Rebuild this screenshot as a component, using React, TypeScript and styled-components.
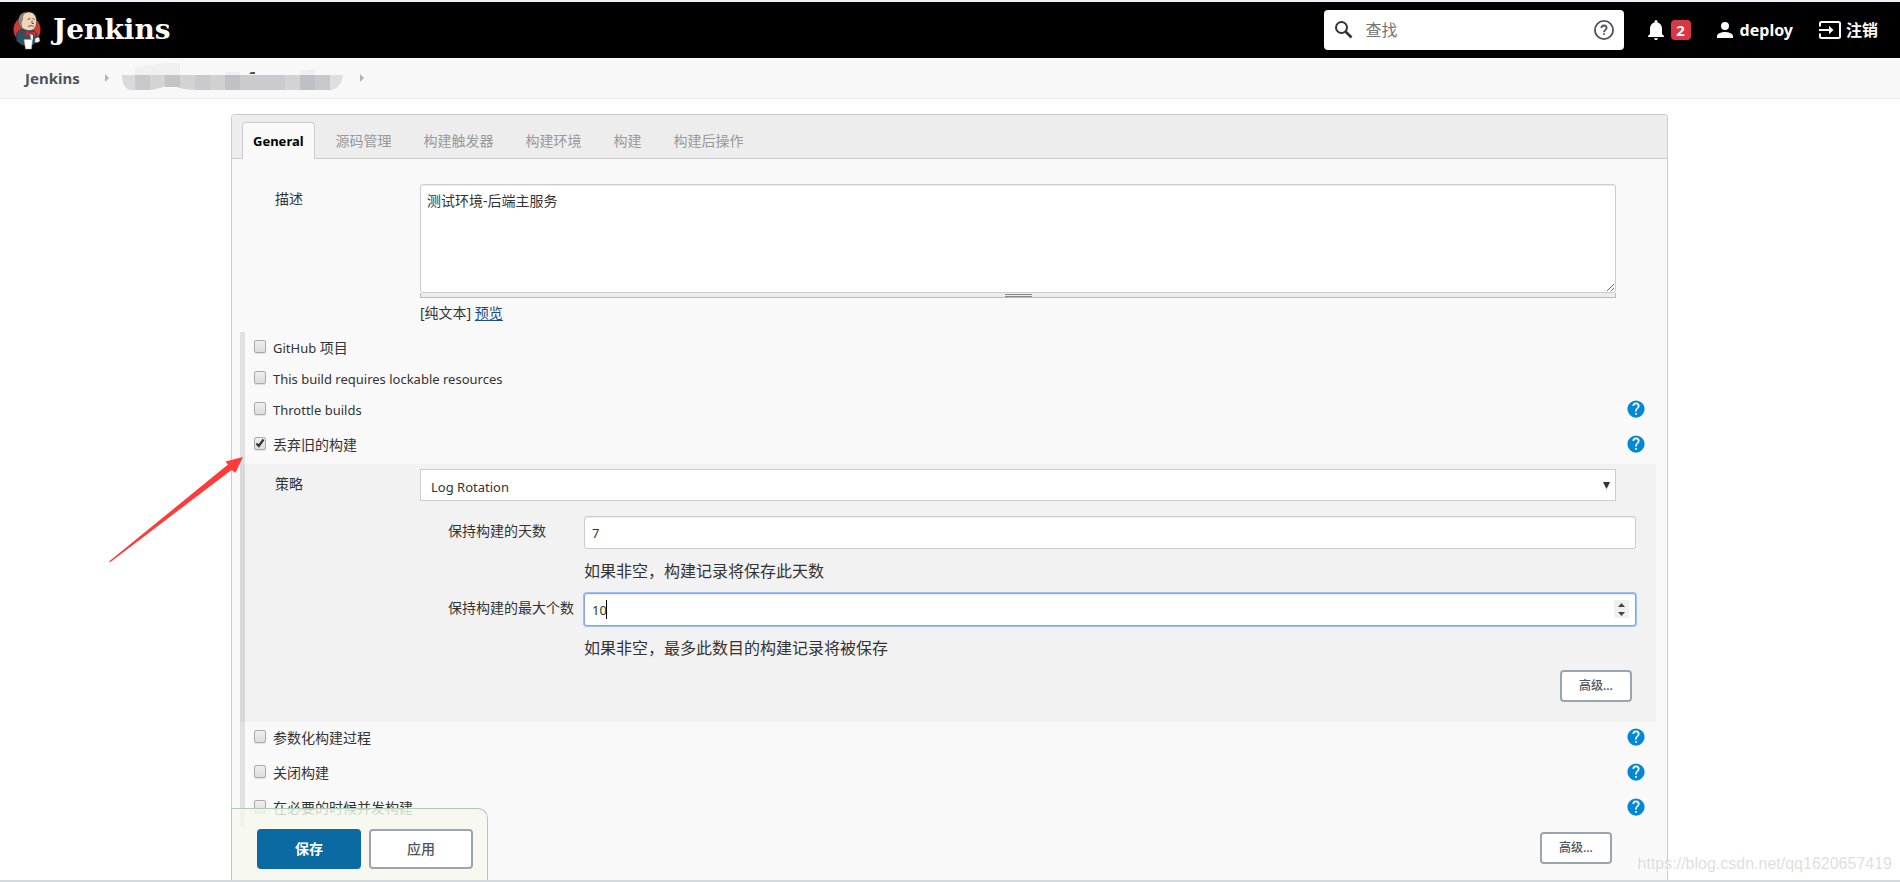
import React, { useState } from "react";
import styled, { createGlobalStyle, css } from "styled-components";

const GlobalStyle = createGlobalStyle`
  *, *::before, *::after { box-sizing: border-box; }
  body {
    margin: 0;
    background: #fff;
    color: #333;
    font: 14px/21px "Noto Sans", "Noto Sans CJK SC", sans-serif;
  }
  button, input, textarea, select { font: inherit; color: inherit; }
`;

const Page = styled.div`
  min-height: 100vh;
  display: flex;
  flex-direction: column;
  border-top: 2px solid #e9f2f8;
  border-bottom: 2px solid #d3dade;
`;

const Header = styled.header`
  display: flex;
  align-items: center;
  height: 56px;
  padding: 0 22px 0 12px;
  background: #000;
  color: #fff;
`;

const Brand = styled.a`
  display: flex;
  align-items: center;
  gap: 11px;
  margin-right: auto;
  color: #fff;
  text-decoration: none;
  font: bold 28px/40px "DejaVu Serif", serif;
`;

const SearchBox = styled.label`
  display: flex;
  align-items: center;
  width: 300px;
  height: 40px;
  margin-right: 24px;
  padding: 0 10px;
  border-radius: 4px;
  background: #fff;
  color: #333;
`;

const SearchInput = styled.input`
  flex: 1;
  min-width: 0;
  margin: 0 12px;
  padding: 0;
  border: 0;
  outline: 0;
  background: none;
  font-size: 16px;
  line-height: 24px;
  &::placeholder { color: #757575; opacity: 1; }
`;

const HeaderLinks = styled.nav`
  display: flex;
  align-items: center;
  gap: 26px;
`;

const HeaderLink = styled.a<{ $gap: number }>`
  display: flex;
  align-items: center;
  gap: ${(p) => p.$gap}px;
  color: #fff;
  font-size: 16px;
  line-height: 24px;
  font-weight: 700;
  text-decoration: none;
  svg { display: block; }
`;

const Badge = styled.span`
  width: 20px;
  border-radius: 4px;
  background: #dc3545;
  font-size: 15px;
  line-height: 20px;
  text-align: center;
`;

const Breadcrumbs = styled.nav`
  display: flex;
  align-items: center;
  height: 41px;
  padding: 0 25px;
  border-bottom: 1px solid #e6efed;
  background: #f8f8f8;
`;

const Crumb = styled.a`
  color: #4d545d;
  font-size: 15px;
  line-height: 24px;
  font-weight: 700;
  text-decoration: none;
`;

const CrumbArrow = styled.span<{ $before: number }>`
  margin: 0 13px 0 ${(p) => p.$before}px;
  border: 4px solid transparent;
  border-left-color: #b4b4b4;
  border-right-width: 0;
`;

const Main = styled.main`
  position: relative;
  flex: 1;
  display: flex;
  padding: 15px 232px 0 231px;
`;

const Panel = styled.form`
  flex: 1;
  min-width: 0;
  border: 1px solid #ccc;
  border-bottom: 0;
  border-radius: 4px 4px 0 0;
  background: #f9f9f9;
`;

const TabBar = styled.div`
  display: flex;
  align-items: flex-end;
  gap: 10px;
  height: 44px;
  padding-left: 10px;
  border-bottom: 1px solid #ccc;
  border-radius: 3px 3px 0 0;
  background: #ededed;
`;

const Tab = styled.button<{ $active?: boolean }>`
  height: 37px;
  margin-bottom: -1px;
  padding: 0 10px 2px;
  border: 1px solid transparent;
  border-bottom: 0;
  border-radius: 4px 4px 0 0;
  background: none;
  color: #999;
  ${(p) =>
    p.$active &&
    css`
      padding-bottom: 0;
      border-color: #ccc;
      background: #f9f9f9;
      color: #000;
      font-size: 13px;
      font-weight: 700;
    `}
`;

const PanelBody = styled.div`
  padding: 25px 11px 0 8px;
`;

const FieldRow = styled.div`
  display: grid;
  grid-template-columns: 145px 1fr;
  padding: 0 40px 0 35px;
`;

const NestedRow = styled(FieldRow)`
  padding-left: 30px;
`;

const FieldLabel = styled.label`
  padding-top: 4px;
`;

const Description = styled.textarea`
  display: block;
  width: 100%;
  height: 109px;
  padding: 5px 6px;
  border: 1px solid #ccc;
  border-radius: 3px;
  background: #fff;
  box-shadow: inset 0 1px 1px rgba(0, 0, 0, 0.08);
  outline: 0;
  resize: vertical;
`;

const ResizeBar = styled.div`
  display: flex;
  justify-content: center;
  align-items: center;
  height: 5px;
  border: 1px solid #bbb;
  border-top: 0;
  background: #ececec;
`;

const Grip = styled.span`
  width: 27px;
  height: 3px;
  border: solid #888;
  border-width: 1px 0;
`;

const PreviewLine = styled.div`
  height: 34px;
  line-height: 29px;
`;

const PreviewLink = styled.a`
  color: #204a87;
  text-underline-offset: 2px;
`;

const OptionGroup = styled.div`
  border-left: 5px solid #e0e0e0;
`;

const OptionRow = styled.div<{ $help?: boolean }>`
  display: flex;
  align-items: flex-start;
  height: ${(p) => (p.$help ? 35 : 31)}px;
  padding: 5px 11px 0 9px;
`;

const OptionLabel = styled.label`
  display: flex;
  gap: 7px;
  margin-right: auto;
`;

const Latin = styled.span`
  font-size: 13px;
  line-height: 23px;
`;

const CheckInput = styled.input`
  appearance: none;
  width: 12px;
  height: 13px;
  margin: 3px 0 0;
  border: 1px solid #aaa;
  border-radius: 2px;
  background: linear-gradient(#efefef, #dcdcdc);
  box-shadow: 0 1px 1px rgba(0, 0, 0, 0.1);
`;

const CheckWrap = styled.span`
  position: relative;
  display: flex;
  align-items: flex-start;
  svg {
    position: absolute;
    left: 1px;
    top: 4px;
    pointer-events: none;
  }
`;

const HelpButton = styled.button`
  display: flex;
  width: 18px;
  height: 18px;
  margin-top: 1px;
  padding: 0;
  border: 0;
  background: none;
`;

const Nested = styled.div`
  margin-left: -5px;
  padding: 5px 0 20px;
  border-left: 5px solid #d9d9d9;
  background: #f2f2f2;
`;

const SelectWrap = styled.div`
  position: relative;
  display: flex;
  svg {
    position: absolute;
    right: 6px;
    top: 13px;
    pointer-events: none;
  }
`;

const Select = styled.select`
  appearance: none;
  flex: 1;
  height: 32px;
  padding: 4px 10px 0;
  border: 1px solid #ccc;
  border-radius: 0;
  background: #fff;
  font-size: 13px;
`;

const NestedFields = styled.div`
  display: grid;
  grid-template-columns: 136px 1fr;
  padding: 15px 20px 0 203px;
`;

const NumberWrap = styled.div`
  position: relative;
  display: flex;
`;

const NumberInput = styled.input<{ $focused?: boolean }>`
  appearance: textfield;
  flex: 1;
  min-width: 0;
  height: 33px;
  padding: 1px 7px 0;
  border: 1px solid #ccc;
  border-radius: 3px;
  background: #fff;
  box-shadow: inset 0 1px 1px rgba(0, 0, 0, 0.08);
  font-size: 13px;
  outline: 0;
  &::-webkit-inner-spin-button { appearance: none; margin: 0; }
  ${(p) =>
    p.$focused &&
    css`
      border-color: #86a9e4;
      box-shadow: 0 0 0 1px #9cbdf8, inset 0 1px 1px rgba(0, 0, 0, 0.08);
      caret-color: transparent;
    `}
`;

const Caret = styled.span`
  position: absolute;
  left: 22px;
  top: 7px;
  width: 1px;
  height: 19px;
  background: #000;
`;

const Spinner = styled.span`
  position: absolute;
  right: 7px;
  top: 7px;
  display: flex;
  flex-direction: column;
  width: 15px;
  height: 18px;
  background: #f0f0f0;
`;

const SpinButton = styled.button`
  display: flex;
  align-items: center;
  justify-content: center;
  height: 9px;
  padding: 0;
  border: 0;
  background: none;
`;

const Hint = styled.p`
  grid-column: 2;
  margin: 0;
  font-size: 16px;
  line-height: 44px;
`;

const ButtonLine = styled.div<{ $right: number; $top?: number }>`
  display: flex;
  justify-content: flex-end;
  padding: ${(p) => p.$top || 0}px ${(p) => p.$right}px 0 0;
`;

const Button = styled.button<{ $primary?: boolean; $large?: boolean }>`
  width: ${(p) => (p.$large ? 104 : 72)}px;
  height: ${(p) => (p.$large ? 40 : 32)}px;
  padding: 0;
  border: 2px solid ${(p) => (p.$primary ? "#0b6aa2" : "#9aa5af")};
  border-radius: 4px;
  background: ${(p) => (p.$primary ? "#0b6aa2" : "#fff")};
  color: ${(p) => (p.$primary ? "#fff" : "#4d545d")};
  font-size: ${(p) => (p.$large ? 14 : 12)}px;
  line-height: 20px;
  font-weight: ${(p) => (p.$primary ? 700 : 500)};
`;

const SaveBar = styled.div`
  position: absolute;
  left: 231px;
  bottom: 0;
  display: flex;
  gap: 8px;
  padding: 20px 14px 11px 25px;
  border: 1px solid #a9cdb8;
  border-bottom: 0;
  border-radius: 0 10px 0 0;
  background: rgba(246, 249, 239, 0.8);
`;

const Pointer = styled.svg`
  position: absolute;
  left: 109px;
  top: 357px;
  pointer-events: none;
`;

const Watermark = styled.span`
  position: absolute;
  right: 8px;
  bottom: 4px;
  color: rgba(200, 200, 200, 0.6);
  font: 16px/24px "Liberation Sans", sans-serif;
  text-shadow: 1px 1px 0 #fff;
`;

function ButlerLogo() {
  return (
    <svg width="30" height="40" viewBox="0 0 30 40" aria-hidden="true">
      <ellipse cx="15" cy="19.500" rx="13.500" ry="13.500" fill="#d33833" />
      <path d="M4.500 24c1-3 4-5 7-5l9 1c3 1 5 4 5 8l-3 6-4 2-9-1-5-4z" fill="#335061" stroke="#1c2b35" strokeWidth=".6" />
      <path d="M7.500 12c0-6 4-10 9-10 5.500 0 8 4 8 9.500 0 6-3 9-6.500 9-5 0-10.500-2-10.500-8.500z" fill="#f0d6b7" stroke="#333" strokeWidth=".5" />
      <path d="M7 14C5 7 9.500 1.500 15 2c-3 1-5 3.500-4.500 7.500L9 13l1 5c-2-1-3-2.500-3-4z" fill="#8e8a87" stroke="#333" strokeWidth=".4" />
      <path d="M15.500 9.500l3-1M20.500 8.500l2 1M20 10.500v3h2M16 16.500c2-1 4-1 6 0" fill="none" stroke="#5a463a" strokeWidth=".9" />
      <path d="M18 24l3 1v5h-2z" fill="#e9eef2" />
      <path d="M14 21l5 2 5-2-.500 5-4.500-2-5 2z" fill="#dd2228" />
      <path d="M12 29.500h8.500l-1 9.500h-6z" fill="#fff" stroke="#999" strokeWidth=".5" />
      <path d="M23 28.500l4-1.500 1 4-2.500 1.500H23z" fill="#f4f4f4" stroke="#777" strokeWidth=".5" />
    </svg>
  );
}

function HelpIcon() {
  return (
    <svg width="18" height="18" viewBox="0 0 24 24" aria-hidden="true">
      <path
        fill="#0288d8"
        d="M12 .5a11.5 11.5 0 1 0 0 23 11.5 11.5 0 0 0 0-23zm1.2 19.2h-2.4v-2.4h2.4v2.4zm2.4-9l-1.1 1.1c-.9.9-1.3 1.6-1.3 3.4h-2.4v-.6c0-1.3.5-2.5 1.4-3.4l1.5-1.5c.4-.4.7-1 .7-1.6a2.4 2.4 0 0 0-4.8 0H7.2a4.8 4.8 0 0 1 9.6 0c0 1-.5 2-1.2 2.6z"
      />
    </svg>
  );
}

const mosaicBlocks: [number, string][] = [
  [13, "#d9dadc"], [15, "#c7c9cc"], [15, "#d3d4d6"], [15, "#c2c4c7"], [15, "#d2d3d5"],
  [15, "#c8cacd"], [15, "#d0d1d3"], [15, "#bfc1c5"], [45, "#c9cbce"], [15, "#d2d3d5"],
  [15, "#bdc1c5"], [15, "#c7c8cc"], [13, "#dddee0"],
];

function HiddenCrumb() {
  let x = 0;
  return (
    <svg width="221" height="34" viewBox="0 0 221 34" aria-hidden="true">
      <clipPath id="crumb-shape">
        <path d="M0 14h221c-1 8-5 14-12 15H75c-8 0-15-1-20-3H42l-12 3H8c-5-1-8-7-8-15z" />
      </clipPath>
      <path d="M13 14V6l30-4h15v12z" fill="#f0f0f0" />
      <path d="M103 14v-3h15v3zM178 14V10l15-2v6z" fill="#efefef" />
      <path d="M127 13l2-2h4v2z" fill="#4d545d" />
      <g clipPath="url(#crumb-shape)">
        {mosaicBlocks.map(([w, fill], i) => {
          const left = x;
          x += w;
          return <rect key={i} x={left} y="13" width={w} height="17" fill={fill} />;
        })}
      </g>
    </svg>
  );
}

interface OptionProps {
  latin?: string;
  label?: string;
  help?: boolean;
  initial?: boolean;
}

function Option({ latin, label, help, initial = false }: OptionProps) {
  const [checked, setChecked] = useState(initial);
  return (
    <OptionRow $help={help}>
      <OptionLabel>
        <CheckWrap>
          <CheckInput type="checkbox" checked={checked} onChange={(e) => setChecked(e.target.checked)} />
          {checked && (
            <svg width="10" height="10" viewBox="0 0 10 10" aria-hidden="true">
              <path d="M1.5 5.5l2.3 2.5 4.7-6.5" fill="none" stroke="#333" strokeWidth="2.2" />
            </svg>
          )}
        </CheckWrap>
        <span>
          {latin && <Latin>{latin}</Latin>}
          {latin && label && " "}
          {label}
        </span>
      </OptionLabel>
      {help && (
        <HelpButton type="button" aria-label={"帮助: " + (latin || label)}>
          <HelpIcon />
        </HelpButton>
      )}
    </OptionRow>
  );
}

const inactiveTabs = ["源码管理", "构建触发器", "构建环境", "构建", "构建后操作"];

export default function App() {
  const [days, setDays] = useState("7");
  const [count, setCount] = useState("10");
  const step = (n: number) => setCount(String(Number(count) + n));
  return (
    <Page>
      <GlobalStyle />
      <Header>
        <Brand href="#">
          <ButlerLogo />
          Jenkins
        </Brand>
        <SearchBox>
          <svg width="20" height="20" viewBox="0 0 20 20" fill="none" stroke="#333" aria-hidden="true">
            <circle cx="7.5" cy="7.5" r="5.5" strokeWidth="2" />
            <path d="M11.5 11.5l6 6" strokeWidth="2.6" />
          </svg>
          <SearchInput type="text" placeholder="查找" aria-label="查找" />
          <svg width="20" height="20" viewBox="0 0 24 24" fill="#4d545d" aria-hidden="true">
            <path d="M11 18h2v-2h-2v2zm1-18a12 12 0 1 0 0 24 12 12 0 0 0 0-24zm0 21.8A9.8 9.8 0 1 1 12 2.200a9.800 9.800 0 0 1 0 19.600zM12 5.500a4.200 4.200 0 0 0-4.200 4.200H10a2 2 0 1 1 4 0c0 2-3 1.900-3 5h2.200c0-2.200 3-2.600 3-5A4.200 4.200 0 0 0 12 5.500z" />
          </svg>
        </SearchBox>
        <HeaderLinks>
          <HeaderLink href="#" $gap={7}>
            <svg width="16" height="20" viewBox="0 0 16 20" fill="#fff" aria-hidden="true">
              <path d="M8 20c1.100 0 2-.800 2-1.800H6C6 19.200 6.900 20 8 20zM14 14V8.500c0-3-1.600-5.300-4.500-6V1.500a1.500 1.500 0 0 0-3 0v1C3.600 3.200 2 5.500 2 8.500V14l-2 2v1h16v-1z" />
            </svg>
            <Badge>2</Badge>
          </HeaderLink>
          <HeaderLink href="#" $gap={7}>
            <svg width="16" height="16" viewBox="4 4 16 16" fill="#fff" aria-hidden="true">
              <path d="M12 12a4 4 0 1 0 0-8 4 4 0 0 0 0 8zm0 2c-2.700 0-8 1.300-8 4v2h16v-2c0-2.700-5.300-4-8-4z" />
            </svg>
            deploy
          </HeaderLink>
          <HeaderLink href="#" $gap={5}>
            <svg width="22" height="18" viewBox="0 0 22 18" fill="none" stroke="#fff" strokeWidth="2" aria-hidden="true">
              <path d="M1 5.500V2.500Q1 1 2.500 1h17Q21 1 21 2.500v13Q21 17 19.500 17h-17Q1 17 1 15.500v-3M0 9h11" />
              <path d="M10 4.800L14.500 9 10 13.200z" fill="#fff" stroke="none" />
            </svg>
            注销
          </HeaderLink>
        </HeaderLinks>
      </Header>
      <Breadcrumbs aria-label="breadcrumb">
        <Crumb href="#">Jenkins</Crumb>
        <CrumbArrow $before={25} />
        <HiddenCrumb />
        <CrumbArrow $before={17} />
      </Breadcrumbs>
      <Main>
        <Panel onSubmit={(e) => e.preventDefault()}>
          <TabBar>
            <Tab type="button" $active>General</Tab>
            {inactiveTabs.map((t) => (
              <Tab type="button" key={t}>{t}</Tab>
            ))}
          </TabBar>
          <PanelBody>
            <FieldRow>
              <FieldLabel htmlFor="description">描述</FieldLabel>
              <div>
                <Description id="description" defaultValue="测试环境-后端主服务" />
                <ResizeBar><Grip /></ResizeBar>
                <PreviewLine>
                  [纯文本] <PreviewLink href="#">预览</PreviewLink>
                </PreviewLine>
              </div>
            </FieldRow>
            <OptionGroup>
              <Option latin="GitHub" label="项目" />
              <Option latin="This build requires lockable resources" />
              <Option latin="Throttle builds" help />
              <Option label="丢弃旧的构建" help initial />
              <Nested>
                <NestedRow>
                  <FieldLabel htmlFor="strategy">策略</FieldLabel>
                  <SelectWrap>
                    <Select id="strategy"><option>Log Rotation</option></Select>
                    <svg width="7" height="7" viewBox="0 0 7 7" aria-hidden="true">
                      <path d="M0 0h7L3.500 7z" fill="#333" />
                    </svg>
                  </SelectWrap>
                </NestedRow>
                <NestedFields>
                  <FieldLabel htmlFor="days">保持构建的天数</FieldLabel>
                  <NumberWrap>
                    <NumberInput id="days" type="number" value={days} onChange={(e) => setDays(e.target.value)} />
                  </NumberWrap>
                  <Hint>如果非空，构建记录将保存此天数</Hint>
                  <FieldLabel htmlFor="count">保持构建的最大个数</FieldLabel>
                  <NumberWrap>
                    <NumberInput id="count" type="number" $focused value={count} onChange={(e) => setCount(e.target.value)} />
                    <Caret />
                    <Spinner>
                      <SpinButton type="button" aria-label="增加" onClick={() => step(1)}>
                        <svg width="7" height="4" viewBox="0 0 7 4"><path d="M0 4L3.500 0 7 4z" fill="#444" /></svg>
                      </SpinButton>
                      <SpinButton type="button" aria-label="减少" onClick={() => step(-1)}>
                        <svg width="7" height="4" viewBox="0 0 7 4"><path d="M0 0h7L3.500 4z" fill="#444" /></svg>
                      </SpinButton>
                    </Spinner>
                  </NumberWrap>
                  <Hint>如果非空，最多此数目的构建记录将被保存</Hint>
                </NestedFields>
                <ButtonLine $right={24}>
                  <Button type="button">高级...</Button>
                </ButtonLine>
              </Nested>
              <Option label="参数化构建过程" help />
              <Option label="关闭构建" help />
              <Option label="在必要的时候并发构建" help />
            </OptionGroup>
            <ButtonLine $right={44} $top={5}>
              <Button type="button">高级...</Button>
            </ButtonLine>
          </PanelBody>
          <SaveBar>
            <Button type="submit" $primary $large>保存</Button>
            <Button type="button" $large>应用</Button>
          </SaveBar>
        </Panel>
        <Pointer width="136" height="108" viewBox="0 0 136 108" aria-hidden="true">
          <path d="M134 1L116.500 5.500l2.500 3L0 105.500l1.500.5L122.500 14l4 2.700z" fill="#fb3c38" />
        </Pointer>
        <Watermark>https://blog.csdn.net/qq1620657419</Watermark>
      </Main>
    </Page>
  );
}
